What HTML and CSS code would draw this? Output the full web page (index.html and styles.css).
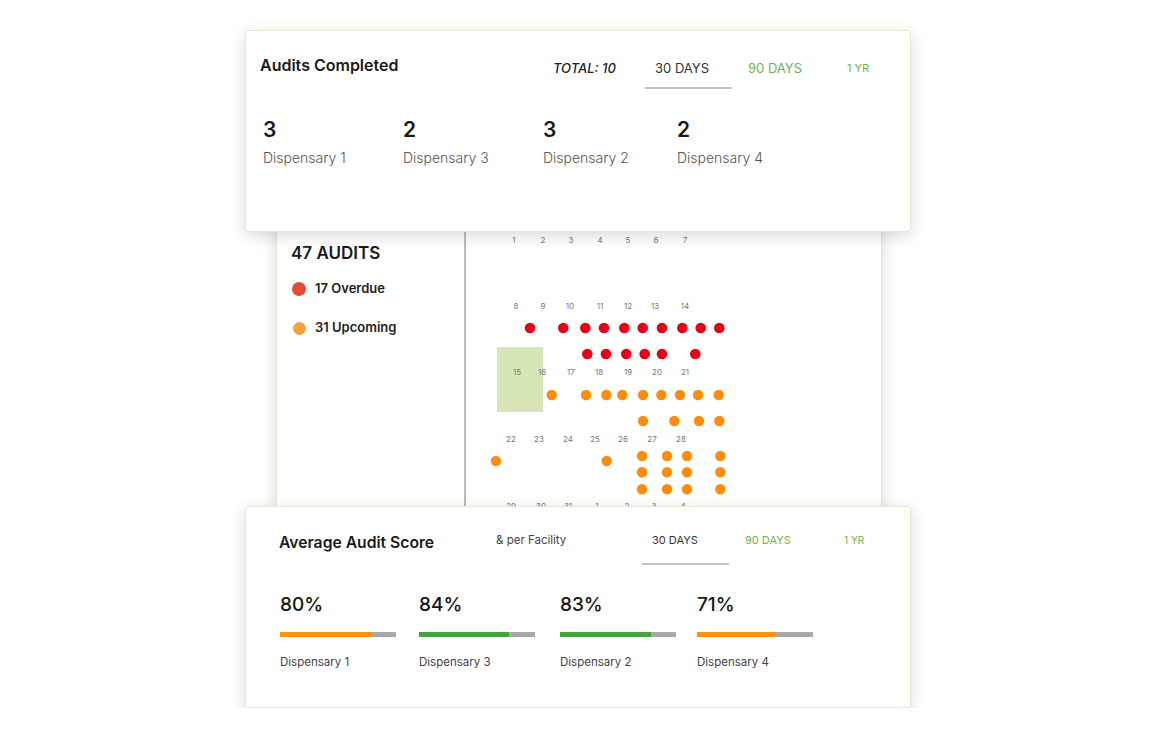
FILE: index.html
```html
<!DOCTYPE html>
<html lang="en">
<head>
<meta charset="utf-8">
<title>Audits</title>
<link rel="stylesheet" href="styles.css">
</head>
<body>
<div class="stage">
  <section class="card card-wide card-top">
    <div class="header">
      <div class="title title-top">Audits Completed</div>
      <div class="tabs tabs-top">
        <div class="tab-total">TOTAL: 10</div>
        <div class="tab active">30 DAYS</div>
        <div class="tab tab-90">90 DAYS</div>
        <div class="tab tab-yr">1 YR</div>
      </div>
    </div>
    <div class="stats">
      <div class="stat"><div class="stat-num">3</div><div class="stat-label">Dispensary 1</div></div>
      <div class="stat"><div class="stat-num">2</div><div class="stat-label">Dispensary 3</div></div>
      <div class="stat"><div class="stat-num">3</div><div class="stat-label">Dispensary 2</div></div>
      <div class="stat"><div class="stat-num">2</div><div class="stat-label">Dispensary 4</div></div>
    </div>
  </section>

  <section class="card card-mid">
    <div class="panel-left">
      <div class="audits-total">47 AUDITS</div>
      <div class="legend legend-overdue"><span class="ldot ldot-red"></span><span>17 Overdue</span></div>
      <div class="legend legend-upcoming"><span class="ldot ldot-orange"></span><span>31 Upcoming</span></div>
    </div>
    <div class="panel-cal">
      <svg class="cal" width="415" height="298" viewBox="0 0 415 298" xmlns="http://www.w3.org/2000/svg">
        <rect x="31" y="134" width="46" height="65" fill="#d6e6b7"/>
        <g class="labels" font-size="8" fill="#777" text-anchor="middle">
          <text x="48" y="30">1</text><text x="77" y="30">2</text><text x="105" y="30">3</text><text x="134" y="30">4</text><text x="162" y="30">5</text><text x="190" y="30">6</text><text x="219" y="30">7</text>
          <text x="50" y="96">8</text><text x="77" y="96">9</text><text x="104" y="96">10</text><text x="134" y="96">11</text><text x="162" y="96">12</text><text x="189" y="96">13</text><text x="219" y="96">14</text>
          <text x="51" y="162">15</text><text x="76" y="162">16</text><text x="105" y="162">17</text><text x="133" y="162">18</text><text x="162" y="162">19</text><text x="191" y="162">20</text><text x="219" y="162">21</text>
          <text x="45" y="229">22</text><text x="73" y="229">23</text><text x="102" y="229">24</text><text x="129" y="229">25</text><text x="157" y="229">26</text><text x="186" y="229">27</text><text x="215" y="229">28</text>
          <text x="45" y="296">29</text><text x="75" y="296">30</text><text x="102" y="296">31</text><text x="131" y="296">1</text><text x="161" y="296">2</text><text x="188" y="296">3</text><text x="217" y="296">4</text>
        </g>
        <g fill="#e8001a">
          <circle cx="64" cy="115" r="5.3"/><circle cx="97.3" cy="115" r="5.3"/><circle cx="119.3" cy="115" r="5.3"/><circle cx="138" cy="115" r="5.3"/><circle cx="158.3" cy="115" r="5.3"/><circle cx="176.7" cy="115" r="5.3"/><circle cx="196" cy="115" r="5.3"/><circle cx="216.3" cy="115" r="5.3"/><circle cx="234.7" cy="115" r="5.3"/><circle cx="253.3" cy="115" r="5.3"/>
          <circle cx="121.3" cy="141" r="5.3"/><circle cx="140" cy="141" r="5.3"/><circle cx="160.3" cy="141" r="5.3"/><circle cx="178.7" cy="141" r="5.3"/><circle cx="196" cy="141" r="5.3"/><circle cx="229.3" cy="141" r="5.3"/>
        </g>
        <g fill="#fd8c0a">
          <circle cx="85.7" cy="182" r="5.2"/><circle cx="120" cy="182" r="5.2"/><circle cx="140.3" cy="182" r="5.2"/><circle cx="156.3" cy="182" r="5.2"/><circle cx="177" cy="182" r="5.2"/><circle cx="195.3" cy="182" r="5.2"/><circle cx="214" cy="182" r="5.2"/><circle cx="232" cy="182" r="5.2"/><circle cx="252.7" cy="182" r="5.2"/>
          <circle cx="177" cy="208" r="5.2"/><circle cx="208.3" cy="208" r="5.2"/><circle cx="233" cy="208" r="5.2"/><circle cx="253.3" cy="208" r="5.2"/>
          <circle cx="30" cy="248" r="5.2"/><circle cx="140.7" cy="248" r="5.2"/>
          <circle cx="176" cy="243" r="5.2"/><circle cx="201" cy="243" r="5.2"/><circle cx="221" cy="243" r="5.2"/><circle cx="254.3" cy="243" r="5.2"/>
          <circle cx="176" cy="259.3" r="5.2"/><circle cx="201" cy="259.3" r="5.2"/><circle cx="221" cy="259.3" r="5.2"/><circle cx="254.3" cy="259.3" r="5.2"/>
          <circle cx="176" cy="276.3" r="5.2"/><circle cx="201" cy="276.3" r="5.2"/><circle cx="221" cy="276.3" r="5.2"/><circle cx="254.3" cy="276.3" r="5.2"/>
        </g>
      </svg>
    </div>
  </section>

  <section class="card card-wide card-bottom">
    <div class="header">
      <div class="title title-bottom">Average Audit Score</div>
      <div class="tabs tabs-bottom">
        <div class="per-facility">&amp; per Facility</div>
        <div class="tab active">30 DAYS</div>
        <div class="tab tab-90">90 DAYS</div>
        <div class="tab tab-yr">1 YR</div>
      </div>
    </div>
    <div class="scores">
      <div class="score">
        <div class="score-num">80%</div>
        <div class="bar"><div class="bar-fill fill-orange" style="width:92px"></div></div>
        <div class="score-label">Dispensary 1</div>
      </div>
      <div class="score">
        <div class="score-num">84%</div>
        <div class="bar"><div class="bar-fill fill-green" style="width:90px"></div></div>
        <div class="score-label">Dispensary 3</div>
      </div>
      <div class="score">
        <div class="score-num">83%</div>
        <div class="bar"><div class="bar-fill fill-green" style="width:91px"></div></div>
        <div class="score-label">Dispensary 2</div>
      </div>
      <div class="score">
        <div class="score-num">71%</div>
        <div class="bar"><div class="bar-fill fill-orange" style="width:78px"></div></div>
        <div class="score-label">Dispensary 4</div>
      </div>
    </div>
  </section>
</div>
</body>
</html>
```

FILE: styles.css
```css
* {
  box-sizing: border-box;
}

body {
  margin: 0;
  background: #ffffff;
  font-family: Inter, "Noto Sans", "Liberation Sans", sans-serif;
  color: #1c1c1c;
}

.stage {
  display: flex;
  flex-direction: column;
  align-items: flex-start;
  padding: 30px 0 0 245px;
}

.card {
  position: relative;
  background: #ffffff;
  border: 1px solid #e2ebd2;
  border-radius: 3px;
  box-shadow: 0 4px 16px rgba(0, 0, 0, 0.15);
}

.card-wide {
  width: 666px;
  height: 202px;
  z-index: 2;
}

/* ---------- top card ---------- */
.card-top {
  padding: 24px 0 0 14px;
}

.header {
  display: flex;
  align-items: flex-start;
}

.title {
  font-weight: 600;
  line-height: 20px;
  color: #1a1a1a;
  flex: none;
}

.title-top {
  width: 293px;
  font-size: 16px;
}

.tabs {
  display: flex;
  align-items: flex-start;
  flex: none;
}

.tabs > div {
  flex: none;
}

.tabs-top {
  margin-top: 4px;
  font-size: 13px;
  line-height: 18px;
}

.tab-total {
  width: 92px;
  font-style: italic;
  font-weight: 500;
  color: #222;
}

.tab {
  padding-bottom: 10px;
  color: #333;
}

.tab.active {
  width: 87px;
  padding-left: 10px;
  border-bottom: 2px solid #c4c4c4;
}

.tab-90 {
  width: 115px;
  padding-left: 16px;
  color: #6bb54c;
}

.tab-yr {
  color: #6bb54c;
  font-size: 11px;
}

.stats {
  display: grid;
  grid-template-columns: 140px 140px 134px 140px;
  margin-top: 29px;
  margin-left: 3px;
}

.stat-num {
  font-size: 21px;
  font-weight: 600;
  line-height: 24px;
  color: #1a1a1a;
}

.stat-label {
  margin-top: 7px;
  font-size: 14px;
  font-weight: 300;
  line-height: 18px;
  color: #555;
}

/* ---------- middle card ---------- */
.card-mid {
  width: 606px;
  height: 300px;
  margin: -20px 0 0 31px;
  z-index: 1;
  display: flex;
  overflow: hidden;
}

.panel-left {
  width: 189px;
  flex: none;
  padding: 29px 0 0 14px;
  border-right: 2px solid #bdbdbd;
}

.audits-total {
  font-size: 17px;
  font-weight: 600;
  line-height: 22px;
  color: #1a1a1a;
}

.legend {
  display: flex;
  align-items: center;
  height: 18px;
  font-size: 13px;
  font-weight: 600;
  color: #222;
}

.legend-overdue {
  margin-top: 15px;
}

.legend-upcoming {
  margin-top: 21px;
}

.ldot {
  display: block;
  border-radius: 50%;
  flex: none;
}

.ldot-red {
  width: 14px;
  height: 14px;
  margin: 2px 9px 0 1px;
  background: #e24b36;
}

.ldot-orange {
  width: 13px;
  height: 13px;
  margin: 3px 9px 0 2px;
  background: #f2a33a;
}

.panel-cal {
  flex: 1;
}

.cal {
  display: block;
  font-family: Inter, "Noto Sans", sans-serif;
}

/* ---------- bottom card ---------- */
.card-bottom {
  margin-top: -6px;
  padding: 26px 0 0 33px;
}

.title-bottom {
  width: 217px;
  font-size: 15.7px;
}

.tabs-bottom {
  margin-top: -1px;
  font-size: 11px;
  line-height: 16px;
}

.per-facility {
  width: 146px;
  font-size: 11.5px;
  color: #444;
}

.tabs-bottom .tab {
  padding-bottom: 15px;
}

.tabs-bottom .tab-yr {
  font-size: 10px;
}

.scores {
  display: grid;
  grid-template-columns: 139px 141px 137px 140px;
  margin-top: 28px;
  margin-left: 1px;
}

.score-num {
  font-size: 19px;
  font-weight: 500;
  line-height: 24px;
  color: #151515;
}

.bar {
  width: 116px;
  height: 5px;
  margin-top: 15px;
  background: #a8a8a8;
  display: flex;
}

.bar-fill {
  height: 100%;
}

.fill-orange {
  background: #ff9408;
}

.fill-green {
  background: #44a33a;
}

.score-label {
  margin-top: 18px;
  font-size: 11.5px;
  line-height: 14px;
  color: #444;
}
```
